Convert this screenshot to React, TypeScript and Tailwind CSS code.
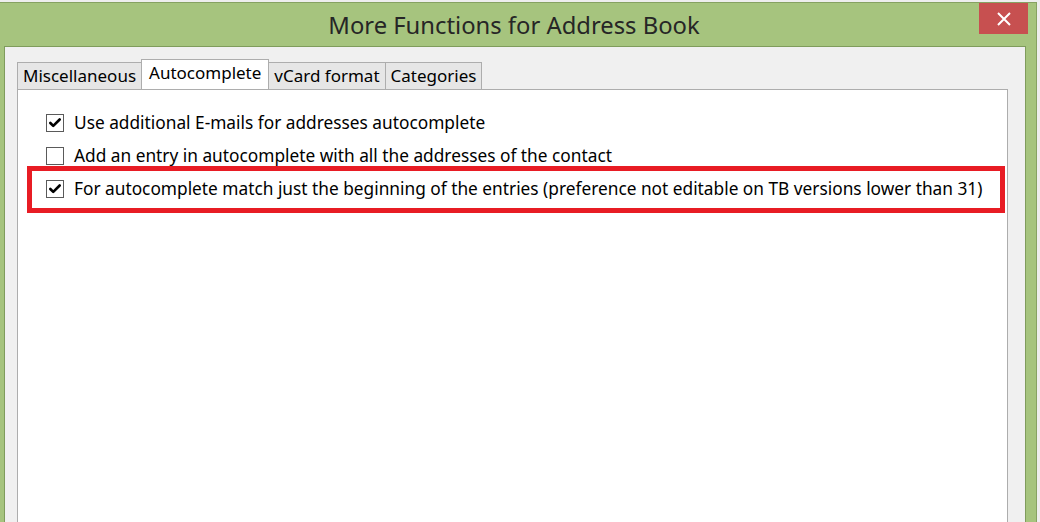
import { Check } from "lucide-react";

const font = { fontFamily: '"Noto Sans", "Open Sans", sans-serif' };

function Tab({ label, active }: { label: string; active?: boolean }) {
  if (active) {
    return (
      <div className="relative z-10 -mb-px -ml-px h-[30px] px-[7px] bg-white border border-[#adadad] border-b-0 text-[17px] leading-[26px] text-black">
        {label}
      </div>
    );
  }
  return (
    <div className="h-[27px] mt-[3px] px-[5px] bg-[#e6e6e6] border border-[#adadad] border-b-0 -ml-px first:ml-0 text-[17px] leading-[25px] text-black">
      {label}
    </div>
  );
}

function Row({ label, checked }: { label: string; checked?: boolean }) {
  return (
    <div className="h-[33px] flex items-center pl-[28px]">
      <div className="w-[18px] h-[18px] border border-[#5a5a5a] bg-white flex items-center justify-center">
        {checked && <Check className="w-[14px] h-[14px] text-black" strokeWidth={4.5} />}
      </div>
      <span className="ml-[10px] text-[17.3px] text-black whitespace-nowrap">{label}</span>
    </div>
  );
}

export default function App() {
  return (
    <div className="w-[1040px] h-[522px] overflow-hidden bg-[#eeeeee] pt-[2px]" style={font}>
      <div className="w-[1037px] h-[520px] bg-[#a6c47e] border-t border-r border-[#86a262] flex flex-col">
        <div className="h-[43px] flex items-start relative">
          <div className="flex-1 text-center text-[23.8px] leading-[45px] text-[#262626] pr-[8px]">
            More Functions for Address Book
          </div>
          <div className="absolute right-[8px] top-0 w-[49px] h-[31px] bg-[#c75050] flex items-center justify-center">
            <svg width="14" height="14" viewBox="0 0 14 14">
              <path d="M1 1 L13 13 M13 1 L1 13" stroke="white" strokeWidth="2" />
            </svg>
          </div>
        </div>
        <div className="ml-[4px] w-[1022px] flex-1 bg-[#f0f0f0] border border-b-0 border-[#7f9c5c] pl-[12px] pr-[17px] pt-[12px] flex flex-col">
          <div className="flex items-start h-[30px]">
            <Tab label="Miscellaneous" />
            <Tab label="Autocomplete" active />
            <Tab label="vCard format" />
            <Tab label="Categories" />
          </div>
          <div className="relative flex-1 bg-white border border-b-0 border-[#adadad] pt-[16px]">
            <Row checked label="Use additional E-mails for addresses autocomplete" />
            <Row label="Add an entry in autocomplete with all the addresses of the contact" />
            <Row
              checked
              label="For autocomplete match just the beginning of the entries (preference not editable on TB versions lower than 31)"
            />
            <div className="absolute left-[9px] top-[76px] w-[978px] h-[47px] border-[5px] border-[#e81c24]" />
          </div>
        </div>
      </div>
    </div>
  );
}
